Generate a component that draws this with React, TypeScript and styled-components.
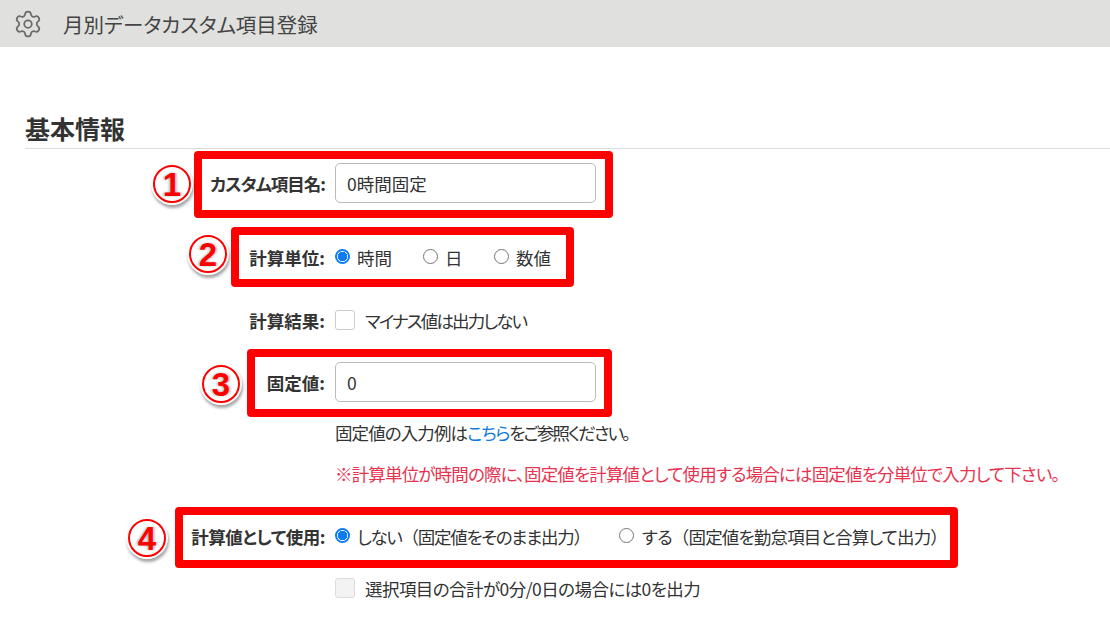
import React from "react";
import styled, { createGlobalStyle } from "styled-components";
import { Settings } from "lucide-react";

const Global = createGlobalStyle`
  html, body { margin: 0; padding: 0; background: #fff; }
  body {
    font-family: "Noto Sans CJK JP", "Noto Sans", sans-serif;
    font-feature-settings: "palt" 1;
    color: #333;
  }
`;

const Page = styled.div`
  position: relative;
  width: 1110px;
  height: 620px;
  overflow: hidden;
`;

const TitleBar = styled.header`
  display: flex;
  align-items: center;
  gap: 20px;
  height: 47px;
  padding-left: 13px;
  background: #e0e0de;
  color: #6a6a6a;
`;

const TitleText = styled.h1`
  margin: 0;
  font-size: 20.5px;
  font-weight: 400;
  color: #444;
`;

const Section = styled.section`
  margin-left: 25px;
`;

const SectionHeading = styled.h2`
  display: flex;
  align-items: flex-end;
  height: 102px;
  box-sizing: border-box;
  margin: 0 0 -1px;
  padding-bottom: 2px;
  border-bottom: 1px solid #ddd;
  font-size: 25px;
  line-height: 36px;
  font-weight: 700;
  color: #333;
`;

const Row = styled.div<{ $height: number }>`
  display: grid;
  grid-template-columns: 300px 1fr;
  column-gap: 10px;
  align-items: center;
  height: ${(p) => p.$height}px;
`;

const Label = styled.label<{ $ls?: number }>`
  justify-self: end;
  font-size: 17.5px;
  font-weight: 700;
  letter-spacing: ${(p) => p.$ls ?? 0}px;
  color: #333;
  white-space: nowrap;
`;

const Control = styled.div`
  grid-column: 2;
  display: flex;
  align-items: center;
  font-size: 17.5px;
  white-space: nowrap;
`;

const TextInput = styled.input`
  width: 261px;
  height: 40px;
  box-sizing: border-box;
  padding: 0 11px;
  border: 1px solid #bbb;
  border-radius: 5px;
  background: #fff;
  font: inherit;
  font-size: 17.5px;
  color: #333;
`;

const Option = styled.label<{ $width?: number; $gap?: number }>`
  display: flex;
  align-items: center;
  gap: ${(p) => p.$gap ?? 7}px;
  width: ${(p) => (p.$width ? `${p.$width}px` : "auto")};
`;

const Text = styled.span<{ $ls?: number; $color?: string }>`
  letter-spacing: ${(p) => p.$ls ?? 0}px;
  color: ${(p) => p.$color ?? "#333"};
`;

const Paren = styled.span`
  font-feature-settings: "palt" 0;
`;

const Radio = styled.input.attrs({ type: "radio" })`
  appearance: none;
  flex: none;
  width: 15px;
  height: 15px;
  margin: -2px 0 0;
  border: 1px solid #767676;
  border-radius: 50%;
  background: #fff;
  &:checked {
    border: 2px solid #0d7bf2;
    background: radial-gradient(circle, #0d7bf2 0 4.5px, #fff 5px);
  }
`;

const CheckBox = styled.input.attrs({ type: "checkbox" })`
  appearance: none;
  flex: none;
  width: 20px;
  height: 20px;
  margin: 0 3px 0 0;
  border: 1px solid #ccc;
  border-radius: 3px;
  background: #fff;
  &:disabled {
    background: #f3f3f3;
    border-color: #ddd;
  }
`;

const Link = styled.a`
  color: #0d7bdc;
  text-decoration: none;
  letter-spacing: -1.2px;
`;

const Annotation = styled.div<{ $l: number; $t: number; $w: number; $h: number }>`
  position: absolute;
  left: ${(p) => p.$l}px;
  top: ${(p) => p.$t}px;
  width: ${(p) => p.$w}px;
  height: ${(p) => p.$h}px;
  box-sizing: border-box;
  border: 8px solid #ff0000;
  border-radius: 4px;
  pointer-events: none;
`;

const Marker = styled.div<{ $cx: number; $cy: number }>`
  position: absolute;
  left: ${(p) => p.$cx - 19}px;
  top: ${(p) => p.$cy - 19}px;
  width: 38px;
  height: 38px;
  box-sizing: border-box;
  display: flex;
  align-items: center;
  justify-content: center;
  border: 2px solid #ff0000;
  border-radius: 50%;
  background: #fff;
  box-shadow: 0 0 0 2px #fff, 1px 3px 3px 2px rgba(0, 0, 0, 0.35);
  font-family: "Liberation Sans", sans-serif;
  font-size: 33px;
  font-weight: 700;
  line-height: 1;
  color: #ff0000;
  text-shadow: 2px 0 2px rgba(0, 0, 0, 0.2), -2px 0 2px rgba(0, 0, 0, 0.2);
`;

export default function App() {
  return (
    <Page>
      <Global />
      <TitleBar>
        <Settings size={30} strokeWidth={1.4} />
        <TitleText>月別データカスタム項目登録</TitleText>
      </TitleBar>
      <Section>
        <SectionHeading>基本情報</SectionHeading>
        <Row $height={70}>
          <Label $ls={-1}>カスタム項目名:</Label>
          <Control>
            <TextInput defaultValue="0時間固定" />
          </Control>
        </Row>
        <Row $height={78}>
          <Label>計算単位:</Label>
          <Control>
            <Option $width={88}><Radio name="unit" defaultChecked /><Text>時間</Text></Option>
            <Option $width={71}><Radio name="unit" /><Text>日</Text></Option>
            <Option><Radio name="unit" /><Text>数値</Text></Option>
          </Control>
        </Row>
        <Row $height={48}>
          <Label>計算結果:</Label>
          <Control>
            <Option><CheckBox /><Text $ls={-1.85}>マイナス値は出力しない</Text></Option>
          </Control>
        </Row>
        <Row $height={76}>
          <Label>固定値:</Label>
          <Control>
            <TextInput defaultValue="0" />
          </Control>
        </Row>
        <Row $height={24}>
          <Control>
            <Text $ls={-0.9}>固定値の入力例は</Text>
            <Link href="#">こちら</Link>
            <Text $ls={-1.95}>をご参照ください。</Text>
          </Control>
        </Row>
        <Row $height={58}>
          <Control>
            <Text $ls={-0.84} $color="#e8334f">※計算単位が時間の際に、固定値を計算値として使用する場合には固定値を分単位で入力して下さい。</Text>
          </Control>
        </Row>
        <Row $height={68}>
          <Label $ls={-0.45}>計算値として使用:</Label>
          <Control>
            <Option $width={284}><Radio name="calc" defaultChecked /><Text $ls={-1.3}>しない<Paren>（</Paren>固定値をそのまま出力<Paren>）</Paren></Text></Option>
            <Option $gap={8}><Radio name="calc" /><Text $ls={-0.84}>する<Paren>（</Paren>固定値を勤怠項目と合算して出力<Paren>）</Paren></Text></Option>
          </Control>
        </Row>
        <Row $height={36}>
          <Control>
            <Option><CheckBox disabled /><Text $ls={-0.55}>選択項目の合計が0分/0日の場合には0を出力</Text></Option>
          </Control>
        </Row>
      </Section>
      <Annotation $l={194} $t={151} $w={419} $h={67} />
      <Annotation $l={231} $t={227} $w={343} $h={60} />
      <Annotation $l={247} $t={349} $w={365} $h={68} />
      <Annotation $l={175} $t={507} $w={783} $h={61} />
      <Marker $cx={172} $cy={184}>1</Marker>
      <Marker $cx={208} $cy={254}>2</Marker>
      <Marker $cx={221} $cy={384}>3</Marker>
      <Marker $cx={147} $cy={538}>4</Marker>
    </Page>
  );
}
